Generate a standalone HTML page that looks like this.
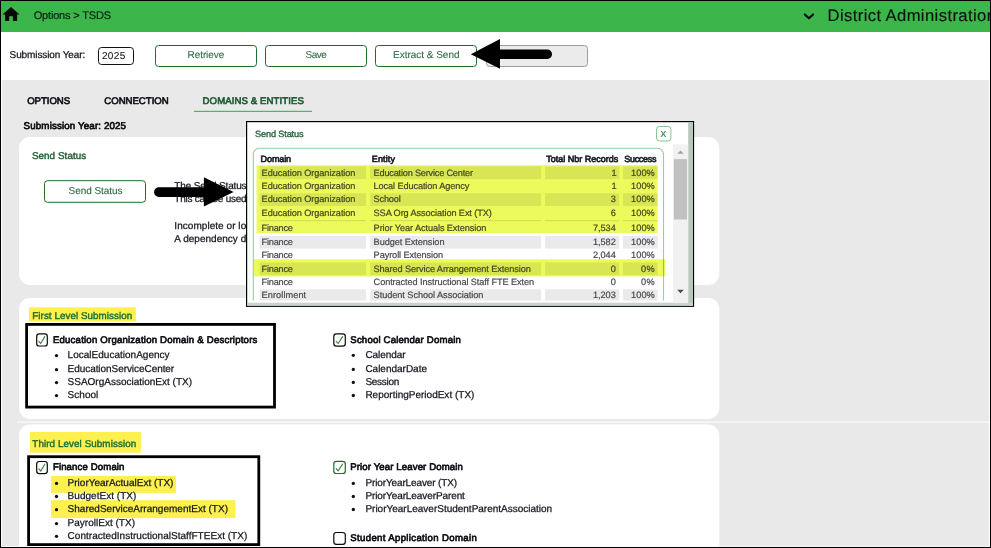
<!DOCTYPE html>
<html lang="en">
<head>
<meta charset="utf-8">
<title>Options &gt; TSDS</title>
<style>
html,body{margin:0;padding:0;background:#000;}
body{width:991px;height:548px;overflow:hidden;position:relative;font-family:"Liberation Sans",sans-serif;text-rendering:geometricPrecision;}
#page{position:absolute;left:0;top:0;width:991px;height:548px;overflow:hidden;isolation:isolate;}
.layer{position:absolute;left:0;top:0;display:block;}
.t{position:absolute;display:block;white-space:nowrap;}
</style>
</head>
<body>
<div id="page">
<svg class="layer" width="991" height="548" viewBox="0 0 991 548">
<rect x="0.00" y="0.00" width="991.00" height="548.00" fill="#000"/>
<rect x="1.00" y="1.00" width="989.00" height="546.00" fill="#fff"/>
<rect x="1.00" y="1.00" width="989.00" height="31.00" fill="#3cb54a"/>
<rect x="2.00" y="80.00" width="987.00" height="466.00" fill="#e9e9e9"/>
<path d="M11 6.9 L19.5 14.4 L17.1 14.4 L17.1 20.9 L12.9 20.9 L12.9 16.2 L9.2 16.2 L9.2 20.9 L5.1 20.9 L5.1 14.4 L2.6 14.4 Z" fill="#0a0a0a"/>
<path d="M804.8 14.4 L808.9 18.3 L813.1 14.4" fill="none" stroke="#0a0a0a" stroke-width="2.1" stroke-linecap="round" stroke-linejoin="round"/>
<rect x="98.50" y="47.50" width="35.00" height="17.00" rx="3" fill="#fff" stroke="#111" stroke-width="1"/>
<rect x="155.50" y="45.50" width="101.00" height="21.00" rx="3" fill="#fff" stroke="#1f6b2c" stroke-width="1"/>
<rect x="265.50" y="45.50" width="101.00" height="21.00" rx="3" fill="#fff" stroke="#1f6b2c" stroke-width="1"/>
<rect x="375.50" y="45.50" width="101.00" height="21.00" rx="3" fill="#fff" stroke="#1f6b2c" stroke-width="1"/>
<rect x="486.50" y="45.50" width="101.00" height="21.00" rx="3" fill="#ebebeb" stroke="#9c9c9c" stroke-width="1"/>
<rect x="194.00" y="110.80" width="118.00" height="1.10" fill="#3cb54a"/>
<rect x="19.00" y="137.00" width="700.30" height="148.00" rx="11" fill="#fff"/>
<rect x="19.00" y="298.00" width="700.30" height="121.00" rx="11" fill="#fff"/>
<rect x="17.00" y="421.40" width="972.00" height="1.50" fill="#f8f8f8"/>
<rect x="19.00" y="424.50" width="700.30" height="140.00" rx="11" fill="#fff"/>
<rect x="44.50" y="180.70" width="101.00" height="21.60" rx="3" fill="#fff" stroke="#1f6b2c" stroke-width="1"/>
<rect x="28.90" y="307.30" width="106.90" height="14.20" fill="#fdf04f"/>
<rect x="36.70" y="333.90" width="10.60" height="12.10" rx="2.6" fill="#fff" stroke="#0a0a0a" stroke-width="1.2"/>
<path d="M38.89 341.30 L40.65 343.50 L44.83 336.60" fill="none" stroke="#3a7d42" stroke-width="1.1" stroke-linecap="round" stroke-linejoin="round"/>
<circle cx="56.50" cy="355.60" r="1.65" fill="#111"/>
<circle cx="56.50" cy="369.70" r="1.65" fill="#111"/>
<circle cx="56.50" cy="382.60" r="1.65" fill="#111"/>
<circle cx="56.50" cy="395.60" r="1.65" fill="#111"/>
<rect x="26.60" y="324.40" width="247.90" height="82.70" fill="none" stroke="#000" stroke-width="2.8"/>
<rect x="333.80" y="333.90" width="11.50" height="12.20" rx="2.6" fill="#fff" stroke="#0a0a0a" stroke-width="1.2"/>
<path d="M336.20 341.30 L338.10 343.50 L342.60 336.60" fill="none" stroke="#3a7d42" stroke-width="1.1" stroke-linecap="round" stroke-linejoin="round"/>
<circle cx="353.30" cy="355.30" r="1.65" fill="#111"/>
<circle cx="353.30" cy="369.40" r="1.65" fill="#111"/>
<circle cx="353.30" cy="382.40" r="1.65" fill="#111"/>
<circle cx="353.30" cy="395.50" r="1.65" fill="#111"/>
<rect x="29.90" y="432.00" width="111.00" height="20.60" fill="#fdf04f"/>
<rect x="36.70" y="461.50" width="10.60" height="12.10" rx="2.6" fill="#fff" stroke="#0a0a0a" stroke-width="1.2"/>
<path d="M38.89 468.90 L40.65 471.10 L44.83 464.20" fill="none" stroke="#3a7d42" stroke-width="1.1" stroke-linecap="round" stroke-linejoin="round"/>
<rect x="51.00" y="475.90" width="125.00" height="17.00" fill="#fdf04f"/>
<rect x="51.00" y="500.20" width="184.50" height="17.90" fill="#fdf04f"/>
<circle cx="56.50" cy="483.40" r="1.65" fill="#111"/>
<circle cx="56.50" cy="496.50" r="1.65" fill="#111"/>
<circle cx="56.50" cy="509.70" r="1.65" fill="#111"/>
<circle cx="56.50" cy="523.60" r="1.65" fill="#111"/>
<circle cx="56.50" cy="536.30" r="1.65" fill="#111"/>
<rect x="28.60" y="456.70" width="230.20" height="87.90" fill="none" stroke="#000" stroke-width="2.8"/>
<rect x="333.80" y="461.30" width="11.50" height="12.20" rx="2.6" fill="#fff" stroke="#1f6a30" stroke-width="1.2"/>
<path d="M336.20 468.70 L338.10 470.90 L342.60 464.00" fill="none" stroke="#3a7d42" stroke-width="1.1" stroke-linecap="round" stroke-linejoin="round"/>
<circle cx="353.30" cy="483.40" r="1.65" fill="#111"/>
<circle cx="353.30" cy="496.50" r="1.65" fill="#111"/>
<circle cx="353.30" cy="509.50" r="1.65" fill="#111"/>
<rect x="333.80" y="532.50" width="11.50" height="11.90" rx="2.6" fill="#fff" stroke="#0a0a0a" stroke-width="1.2"/>
</svg>
<span class="t" style="left:33.70px;top:9px;font-size:11.0px;line-height:14px;color:#0e2012;letter-spacing:-0.176px;-webkit-text-stroke:0.2px #0e2012;">Options &gt; TSDS</span>
<span class="t" style="left:827.50px;top:5px;font-size:16.6px;line-height:22px;color:#0a140c;letter-spacing:0.405px;-webkit-text-stroke:0.15px #0a140c;">District Administration</span>
<span class="t" style="left:9.60px;top:49px;font-size:10.0px;line-height:13px;color:#14161d;letter-spacing:-0.105px;-webkit-text-stroke:0.25px #14161d;">Submission Year:</span>
<span class="t" style="left:101.90px;top:50px;font-size:10.0px;line-height:13px;color:#14161c;letter-spacing:0.384px;-webkit-text-stroke:0.1px #14161c;">2025</span>
<span class="t" style="left:187.60px;top:49px;font-size:10.0px;line-height:13px;color:#2f6a45;letter-spacing:-0.091px;-webkit-text-stroke:0.1px #2f6a45;">Retrieve</span>
<span class="t" style="left:305.50px;top:49px;font-size:10.0px;line-height:13px;color:#2f6a45;letter-spacing:-0.531px;-webkit-text-stroke:0.1px #2f6a45;">Save</span>
<span class="t" style="left:393.10px;top:49px;font-size:10.0px;line-height:13px;color:#2f6a45;letter-spacing:-0.023px;-webkit-text-stroke:0.1px #2f6a45;">Extract &amp; Send</span>
<span class="t" style="left:27.20px;top:96px;font-size:9.6px;line-height:12px;color:#10131a;letter-spacing:-0.034px;-webkit-text-stroke:0.65px #10131a;">OPTIONS</span>
<span class="t" style="left:104.30px;top:96px;font-size:9.6px;line-height:12px;color:#10131a;letter-spacing:-0.015px;-webkit-text-stroke:0.65px #10131a;">CONNECTION</span>
<span class="t" style="left:202.60px;top:96px;font-size:9.6px;line-height:12px;color:#1f5c38;letter-spacing:0.091px;-webkit-text-stroke:0.65px #1f5c38;">DOMAINS &amp; ENTITIES</span>
<span class="t" style="left:23.60px;top:120px;font-size:9.8px;line-height:13px;color:#0c0e13;letter-spacing:0.112px;-webkit-text-stroke:0.65px #0c0e13;">Submission Year: 2025</span>
<span class="t" style="left:31.90px;top:150px;font-size:9.8px;line-height:13px;color:#25633a;letter-spacing:0.091px;-webkit-text-stroke:0.45px #25633a;">Send Status</span>
<span class="t" style="left:68.60px;top:185px;font-size:10.0px;line-height:13px;color:#2f6a45;letter-spacing:-0.058px;-webkit-text-stroke:0.1px #2f6a45;">Send Status</span>
<span class="t" style="left:174.30px;top:180px;font-size:10.0px;line-height:13px;color:#14161d;letter-spacing:-0.157px;-webkit-text-stroke:0.25px #14161d;">The Send Status</span>
<span class="t" style="left:174.30px;top:193px;font-size:10.0px;line-height:13px;color:#14161d;letter-spacing:-0.257px;-webkit-text-stroke:0.25px #14161d;">This can be used</span>
<span class="t" style="left:174.30px;top:220px;font-size:10.0px;line-height:13px;color:#14161d;letter-spacing:0.050px;-webkit-text-stroke:0.25px #14161d;">Incomplete or lo</span>
<span class="t" style="left:174.30px;top:233px;font-size:10.0px;line-height:13px;color:#14161d;letter-spacing:0.013px;-webkit-text-stroke:0.25px #14161d;">A dependency d</span>
<span class="t" style="left:32.30px;top:310px;font-size:9.8px;line-height:13px;color:#1f6e2c;letter-spacing:0.063px;-webkit-text-stroke:0.42px #1f6e2c;">First Level Submission</span>
<span class="t" style="left:52.90px;top:335px;font-size:9.6px;line-height:12px;color:#0c0e13;letter-spacing:0.209px;-webkit-text-stroke:0.65px #0c0e13;">Education Organization Domain &amp; Descriptors</span>
<span class="t" style="left:67.60px;top:349px;font-size:10.0px;line-height:13px;color:#14161d;letter-spacing:0.014px;-webkit-text-stroke:0.25px #14161d;">LocalEducationAgency</span>
<span class="t" style="left:67.60px;top:363px;font-size:10.0px;line-height:13px;color:#14161d;letter-spacing:-0.059px;-webkit-text-stroke:0.25px #14161d;">EducationServiceCenter</span>
<span class="t" style="left:67.60px;top:376px;font-size:10.0px;line-height:13px;color:#14161d;letter-spacing:-0.004px;-webkit-text-stroke:0.25px #14161d;">SSAOrgAssociationExt (TX)</span>
<span class="t" style="left:67.60px;top:389px;font-size:10.0px;line-height:13px;color:#14161d;letter-spacing:0.025px;-webkit-text-stroke:0.25px #14161d;">School</span>
<span class="t" style="left:350.30px;top:335px;font-size:9.6px;line-height:12px;color:#0c0e13;letter-spacing:0.184px;-webkit-text-stroke:0.65px #0c0e13;">School Calendar Domain</span>
<span class="t" style="left:365.40px;top:349px;font-size:10.0px;line-height:13px;color:#14161d;letter-spacing:-0.069px;-webkit-text-stroke:0.25px #14161d;">Calendar</span>
<span class="t" style="left:365.40px;top:363px;font-size:10.0px;line-height:13px;color:#14161d;letter-spacing:-0.010px;-webkit-text-stroke:0.25px #14161d;">CalendarDate</span>
<span class="t" style="left:365.40px;top:376px;font-size:10.0px;line-height:13px;color:#14161d;letter-spacing:-0.280px;-webkit-text-stroke:0.25px #14161d;">Session</span>
<span class="t" style="left:365.40px;top:389px;font-size:10.0px;line-height:13px;color:#14161d;letter-spacing:0.003px;-webkit-text-stroke:0.25px #14161d;">ReportingPeriodExt (TX)</span>
<span class="t" style="left:32.30px;top:438px;font-size:9.8px;line-height:13px;color:#1f6e2c;letter-spacing:0.097px;-webkit-text-stroke:0.42px #1f6e2c;">Third Level Submission</span>
<span class="t" style="left:52.90px;top:462px;font-size:9.6px;line-height:12px;color:#0c0e13;letter-spacing:0.131px;-webkit-text-stroke:0.65px #0c0e13;">Finance Domain</span>
<span class="t" style="left:67.60px;top:477px;font-size:10.0px;line-height:13px;color:#14161d;letter-spacing:0.001px;-webkit-text-stroke:0.25px #14161d;">PriorYearActualExt (TX)</span>
<span class="t" style="left:67.60px;top:490px;font-size:10.0px;line-height:13px;color:#14161d;letter-spacing:0.034px;-webkit-text-stroke:0.25px #14161d;">BudgetExt (TX)</span>
<span class="t" style="left:67.60px;top:503px;font-size:10.0px;line-height:13px;color:#14161d;letter-spacing:0.011px;-webkit-text-stroke:0.25px #14161d;">SharedServiceArrangementExt (TX)</span>
<span class="t" style="left:67.60px;top:517px;font-size:10.0px;line-height:13px;color:#14161d;letter-spacing:0.012px;-webkit-text-stroke:0.25px #14161d;">PayrollExt (TX)</span>
<span class="t" style="left:67.60px;top:530px;font-size:10.0px;line-height:13px;color:#14161d;letter-spacing:0.024px;-webkit-text-stroke:0.25px #14161d;">ContractedInstructionalStaffFTEExt (TX)</span>
<span class="t" style="left:350.30px;top:462px;font-size:9.6px;line-height:12px;color:#0c0e13;letter-spacing:0.116px;-webkit-text-stroke:0.65px #0c0e13;">Prior Year Leaver Domain</span>
<span class="t" style="left:365.40px;top:477px;font-size:10.0px;line-height:13px;color:#14161d;letter-spacing:-0.122px;-webkit-text-stroke:0.25px #14161d;">PriorYearLeaver (TX)</span>
<span class="t" style="left:365.40px;top:490px;font-size:10.0px;line-height:13px;color:#14161d;letter-spacing:-0.093px;-webkit-text-stroke:0.25px #14161d;">PriorYearLeaverParent</span>
<span class="t" style="left:365.40px;top:503px;font-size:10.0px;line-height:13px;color:#14161d;letter-spacing:-0.005px;-webkit-text-stroke:0.25px #14161d;">PriorYearLeaverStudentParentAssociation</span>
<span class="t" style="left:350.30px;top:533px;font-size:9.6px;line-height:12px;color:#0c0e13;letter-spacing:0.342px;-webkit-text-stroke:0.65px #0c0e13;">Student Application Domain</span>
<svg class="layer" width="991" height="548" viewBox="0 0 991 548">
<path d="M470.8 54.2 L500 39 L500 49.6 L547.4 49.6 A4.65 4.65 0 0 1 547.4 58.9 L500 58.9 L500 68.7 Z" fill="#000"/>
<path d="M233.6 192 L203.9 177.2 L203.9 187.3 L158.9 187.3 A4.85 4.85 0 0 0 158.9 197 L203.9 197 L203.9 206.5 Z" fill="#000"/>
<rect x="246.00" y="121.00" width="448.10" height="185.90" fill="#000"/>
<rect x="247.20" y="122.20" width="445.70" height="183.50" fill="#fff"/>
<rect x="688.20" y="122.20" width="4.70" height="183.50" fill="#b9c6bb"/>
<rect x="247.20" y="302.70" width="445.70" height="3.00" fill="#c9d2cb"/>
<rect x="656.50" y="126.50" width="14.40" height="14.50" rx="3" fill="#fff" stroke="#86c394" stroke-width="1"/>
<rect x="673.00" y="144.50" width="15.20" height="158.20" fill="#f1f1f1"/>
<path d="M680.5 150.6 L683.7 153.7 L677.3 153.7 Z" fill="#a0a0a0"/>
<path d="M680.5 293.3 L683.7 289.7 L677.3 289.7 Z" fill="#4a4a4a"/>
<rect x="673.90" y="159.10" width="13.10" height="60.40" fill="#c1c1c1"/>
<clipPath id="tc"><rect x="250" y="145" width="420" height="155.5"/></clipPath>
<rect x="253.3" y="148.3" width="410.2" height="200" rx="6" fill="none" stroke="#8ed4a0" stroke-width="1.1" clip-path="url(#tc)"/>
<rect x="259.60" y="166.40" width="106.50" height="12.70" fill="#eaeaea"/>
<rect x="370.20" y="166.40" width="170.90" height="12.70" fill="#eaeaea"/>
<rect x="545.10" y="166.40" width="74.20" height="12.70" fill="#eaeaea"/>
<rect x="622.90" y="166.40" width="34.70" height="12.70" fill="#eaeaea"/>
<rect x="259.60" y="193.30" width="106.50" height="12.70" fill="#eaeaea"/>
<rect x="370.20" y="193.30" width="170.90" height="12.70" fill="#eaeaea"/>
<rect x="545.10" y="193.30" width="74.20" height="12.70" fill="#eaeaea"/>
<rect x="622.90" y="193.30" width="34.70" height="12.70" fill="#eaeaea"/>
<rect x="259.60" y="235.90" width="106.50" height="12.70" fill="#eaeaea"/>
<rect x="370.20" y="235.90" width="170.90" height="12.70" fill="#eaeaea"/>
<rect x="545.10" y="235.90" width="74.20" height="12.70" fill="#eaeaea"/>
<rect x="622.90" y="235.90" width="34.70" height="12.70" fill="#eaeaea"/>
<rect x="259.60" y="262.50" width="106.50" height="12.70" fill="#eaeaea"/>
<rect x="370.20" y="262.50" width="170.90" height="12.70" fill="#eaeaea"/>
<rect x="545.10" y="262.50" width="74.20" height="12.70" fill="#eaeaea"/>
<rect x="622.90" y="262.50" width="34.70" height="12.70" fill="#eaeaea"/>
<rect x="259.60" y="289.30" width="106.50" height="11.20" fill="#eaeaea"/>
<rect x="370.20" y="289.30" width="170.90" height="11.20" fill="#eaeaea"/>
<rect x="545.10" y="289.30" width="74.20" height="11.20" fill="#eaeaea"/>
<rect x="622.90" y="289.30" width="34.70" height="11.20" fill="#eaeaea"/>
<rect x="259.60" y="220.00" width="106.50" height="1.20" fill="#e6e6e6"/>
<rect x="370.20" y="220.00" width="170.90" height="1.20" fill="#e6e6e6"/>
<rect x="545.10" y="220.00" width="74.20" height="1.20" fill="#e6e6e6"/>
<rect x="622.90" y="220.00" width="34.70" height="1.20" fill="#e6e6e6"/>
</svg>
<span class="t" style="left:255.10px;top:128px;font-size:9.2px;line-height:12px;color:#25633a;letter-spacing:-0.162px;-webkit-text-stroke:0.35px #25633a;">Send Status</span>
<span class="t" style="left:660.50px;top:129px;font-size:8.6px;line-height:11px;color:#2e7d46;letter-spacing:0.064px;-webkit-text-stroke:0.2px #2e7d46;">X</span>
<span class="t" style="left:260.60px;top:153px;font-size:9.0px;line-height:12px;color:#1b1e26;letter-spacing:-0.103px;-webkit-text-stroke:0.65px #1b1e26;">Domain</span>
<span class="t" style="left:371.80px;top:153px;font-size:9.0px;line-height:12px;color:#1b1e26;letter-spacing:0.138px;-webkit-text-stroke:0.65px #1b1e26;">Entity</span>
<span class="t" style="left:546.20px;top:153px;font-size:9.0px;line-height:12px;color:#1b1e26;letter-spacing:0.004px;-webkit-text-stroke:0.65px #1b1e26;">Total Nbr Records</span>
<span class="t" style="left:624.30px;top:153px;font-size:9.0px;line-height:12px;color:#1b1e26;letter-spacing:-0.319px;-webkit-text-stroke:0.65px #1b1e26;">Success</span>
<span class="t" style="left:261.60px;top:167px;font-size:9.2px;line-height:12px;color:#47484f;letter-spacing:-0.078px;-webkit-text-stroke:0.2px #47484f;">Education Organization</span>
<span class="t" style="left:373.60px;top:167px;font-size:9.2px;line-height:12px;color:#47484f;letter-spacing:-0.210px;-webkit-text-stroke:0.2px #47484f;">Education Service Center</span>
<span class="t" style="left:611.60px;top:167px;font-size:9.2px;line-height:12px;color:#47484f;letter-spacing:-0.917px;-webkit-text-stroke:0.2px #47484f;">1</span>
<span class="t" style="left:631.00px;top:167px;font-size:9.2px;line-height:12px;color:#47484f;letter-spacing:0.090px;-webkit-text-stroke:0.2px #47484f;">100%</span>
<span class="t" style="left:261.60px;top:180px;font-size:9.2px;line-height:12px;color:#47484f;letter-spacing:-0.078px;-webkit-text-stroke:0.2px #47484f;">Education Organization</span>
<span class="t" style="left:373.60px;top:180px;font-size:9.2px;line-height:12px;color:#47484f;letter-spacing:-0.115px;-webkit-text-stroke:0.2px #47484f;">Local Education Agency</span>
<span class="t" style="left:611.60px;top:180px;font-size:9.2px;line-height:12px;color:#47484f;letter-spacing:-0.917px;-webkit-text-stroke:0.2px #47484f;">1</span>
<span class="t" style="left:631.00px;top:180px;font-size:9.2px;line-height:12px;color:#47484f;letter-spacing:0.090px;-webkit-text-stroke:0.2px #47484f;">100%</span>
<span class="t" style="left:261.60px;top:193px;font-size:9.2px;line-height:12px;color:#47484f;letter-spacing:-0.078px;-webkit-text-stroke:0.2px #47484f;">Education Organization</span>
<span class="t" style="left:373.60px;top:193px;font-size:9.2px;line-height:12px;color:#47484f;letter-spacing:-0.186px;-webkit-text-stroke:0.2px #47484f;">School</span>
<span class="t" style="left:610.80px;top:193px;font-size:9.2px;line-height:12px;color:#47484f;letter-spacing:-0.117px;-webkit-text-stroke:0.2px #47484f;">3</span>
<span class="t" style="left:631.00px;top:193px;font-size:9.2px;line-height:12px;color:#47484f;letter-spacing:0.090px;-webkit-text-stroke:0.2px #47484f;">100%</span>
<span class="t" style="left:261.60px;top:207px;font-size:9.2px;line-height:12px;color:#47484f;letter-spacing:-0.078px;-webkit-text-stroke:0.2px #47484f;">Education Organization</span>
<span class="t" style="left:373.60px;top:207px;font-size:9.2px;line-height:12px;color:#47484f;letter-spacing:-0.103px;-webkit-text-stroke:0.2px #47484f;">SSA Org Association Ext (TX)</span>
<span class="t" style="left:610.80px;top:207px;font-size:9.2px;line-height:12px;color:#47484f;letter-spacing:-0.117px;-webkit-text-stroke:0.2px #47484f;">6</span>
<span class="t" style="left:631.00px;top:207px;font-size:9.2px;line-height:12px;color:#47484f;letter-spacing:0.090px;-webkit-text-stroke:0.2px #47484f;">100%</span>
<span class="t" style="left:261.60px;top:222px;font-size:9.2px;line-height:12px;color:#47484f;letter-spacing:-0.239px;-webkit-text-stroke:0.2px #47484f;">Finance</span>
<span class="t" style="left:373.60px;top:222px;font-size:9.2px;line-height:12px;color:#47484f;letter-spacing:-0.096px;-webkit-text-stroke:0.2px #47484f;">Prior Year Actuals Extension</span>
<span class="t" style="left:592.90px;top:222px;font-size:9.2px;line-height:12px;color:#47484f;letter-spacing:-0.031px;-webkit-text-stroke:0.2px #47484f;">7,534</span>
<span class="t" style="left:631.00px;top:222px;font-size:9.2px;line-height:12px;color:#47484f;letter-spacing:0.090px;-webkit-text-stroke:0.2px #47484f;">100%</span>
<span class="t" style="left:261.60px;top:236px;font-size:9.2px;line-height:12px;color:#47484f;letter-spacing:-0.239px;-webkit-text-stroke:0.2px #47484f;">Finance</span>
<span class="t" style="left:373.60px;top:236px;font-size:9.2px;line-height:12px;color:#47484f;letter-spacing:-0.075px;-webkit-text-stroke:0.2px #47484f;">Budget Extension</span>
<span class="t" style="left:592.90px;top:236px;font-size:9.2px;line-height:12px;color:#47484f;letter-spacing:-0.031px;-webkit-text-stroke:0.2px #47484f;">1,582</span>
<span class="t" style="left:631.00px;top:236px;font-size:9.2px;line-height:12px;color:#47484f;letter-spacing:0.090px;-webkit-text-stroke:0.2px #47484f;">100%</span>
<span class="t" style="left:261.60px;top:249px;font-size:9.2px;line-height:12px;color:#47484f;letter-spacing:-0.239px;-webkit-text-stroke:0.2px #47484f;">Finance</span>
<span class="t" style="left:373.60px;top:249px;font-size:9.2px;line-height:12px;color:#47484f;letter-spacing:-0.093px;-webkit-text-stroke:0.2px #47484f;">Payroll Extension</span>
<span class="t" style="left:592.90px;top:249px;font-size:9.2px;line-height:12px;color:#47484f;letter-spacing:-0.031px;-webkit-text-stroke:0.2px #47484f;">2,044</span>
<span class="t" style="left:631.00px;top:249px;font-size:9.2px;line-height:12px;color:#47484f;letter-spacing:0.090px;-webkit-text-stroke:0.2px #47484f;">100%</span>
<span class="t" style="left:261.60px;top:263px;font-size:9.2px;line-height:12px;color:#47484f;letter-spacing:-0.239px;-webkit-text-stroke:0.2px #47484f;">Finance</span>
<span class="t" style="left:373.60px;top:263px;font-size:9.2px;line-height:12px;color:#47484f;letter-spacing:-0.106px;-webkit-text-stroke:0.2px #47484f;">Shared Service Arrangement Extension</span>
<span class="t" style="left:610.80px;top:263px;font-size:9.2px;line-height:12px;color:#47484f;letter-spacing:-0.117px;-webkit-text-stroke:0.2px #47484f;">0</span>
<span class="t" style="left:641.10px;top:263px;font-size:9.2px;line-height:12px;color:#47484f;letter-spacing:0.403px;-webkit-text-stroke:0.2px #47484f;">0%</span>
<span class="t" style="left:261.60px;top:276px;font-size:9.2px;line-height:12px;color:#47484f;letter-spacing:-0.239px;-webkit-text-stroke:0.2px #47484f;">Finance</span>
<span class="t" style="left:373.60px;top:276px;font-size:9.2px;line-height:12px;color:#47484f;letter-spacing:-0.095px;-webkit-text-stroke:0.2px #47484f;">Contracted Instructional Staff FTE Exten</span>
<span class="t" style="left:610.80px;top:276px;font-size:9.2px;line-height:12px;color:#47484f;letter-spacing:-0.117px;-webkit-text-stroke:0.2px #47484f;">0</span>
<span class="t" style="left:641.10px;top:276px;font-size:9.2px;line-height:12px;color:#47484f;letter-spacing:0.403px;-webkit-text-stroke:0.2px #47484f;">0%</span>
<span class="t" style="left:261.60px;top:289px;font-size:9.2px;line-height:12px;color:#47484f;letter-spacing:0.069px;-webkit-text-stroke:0.2px #47484f;">Enrollment</span>
<span class="t" style="left:373.60px;top:289px;font-size:9.2px;line-height:12px;color:#47484f;letter-spacing:-0.060px;-webkit-text-stroke:0.2px #47484f;">Student School Association</span>
<span class="t" style="left:592.90px;top:289px;font-size:9.2px;line-height:12px;color:#47484f;letter-spacing:-0.031px;-webkit-text-stroke:0.2px #47484f;">1,203</span>
<span class="t" style="left:631.00px;top:289px;font-size:9.2px;line-height:12px;color:#47484f;letter-spacing:0.090px;-webkit-text-stroke:0.2px #47484f;">100%</span>
<svg class="layer" width="991" height="548" viewBox="0 0 991 548" style="mix-blend-mode:multiply">
<rect x="256.50" y="165.20" width="401.00" height="67.80" fill="#ecfa5c"/>
<rect x="254.00" y="259.30" width="411.30" height="17.10" fill="#ecfa5c"/>
</svg>

<svg class="layer" width="991" height="548" viewBox="0 0 991 548">
<rect x="0.00" y="0.00" width="991.00" height="1.00" fill="#000"/>
<rect x="0.00" y="547.00" width="991.00" height="1.00" fill="#000"/>
<rect x="0.00" y="0.00" width="1.00" height="548.00" fill="#000"/>
<rect x="990.00" y="0.00" width="1.00" height="548.00" fill="#000"/>
<rect x="1.00" y="546.00" width="718.00" height="1.00" fill="#fff"/>
<rect x="719.00" y="546.00" width="271.00" height="1.00" fill="#f4f4f4"/>
</svg>

</div>
</body>
</html>
